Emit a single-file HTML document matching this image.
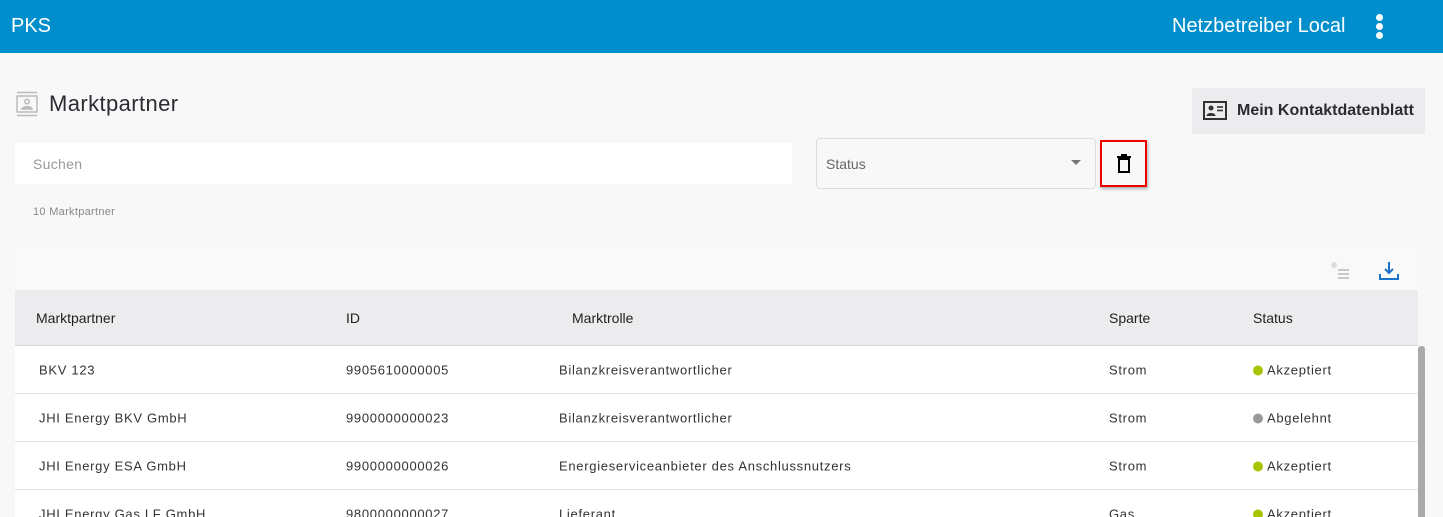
<!DOCTYPE html>
<html style="overflow:hidden"><head><meta charset="utf-8"><style>
*{box-sizing:border-box;margin:0;padding:0}
html,body{overflow:hidden}
body{width:1443px;height:517px;background:#f8f8f8;font-family:"Liberation Sans",sans-serif;position:relative;color:#222}
.top{position:absolute;left:0;top:0;width:1443px;height:53px;background:#008fcc;color:#fff}
.abs{position:absolute}
.hdr{position:absolute;left:15px;top:290px;width:1403px;height:56px;background:#ececee;border-bottom:1px solid #d6d6d6;font-size:14px;color:#222}
.row{position:absolute;left:15px;width:1403px;height:48px;background:#fff;border-bottom:1px solid #e2e2e2;font-size:13px;color:#333;letter-spacing:0.7px}
.row span,.hdr span{position:absolute;top:50%;transform:translateY(-50%);white-space:nowrap}
.dot{display:inline-block;width:10px;height:10px;border-radius:50%;margin-right:4px;vertical-align:-1px}
</style></head><body>
<div class="top">
<div class="abs" style="left:11px;top:15px;font-size:20px">PKS</div>
<div class="abs" style="left:1172px;top:15px;font-size:20px">Netzbetreiber Local</div>
<div class="abs" style="left:1376px;top:14px;width:7px">
<div style="width:7px;height:7px;border-radius:50%;background:#fff;margin-bottom:2px"></div>
<div style="width:7px;height:7px;border-radius:50%;background:#fff;margin-bottom:2px"></div>
<div style="width:7px;height:7px;border-radius:50%;background:#fff"></div></div>
</div>
<svg class="abs" style="left:16px;top:91px" width="22" height="26" viewBox="0 0 22 26"><g fill="none" stroke="#bbb" stroke-width="1.5"><line x1="1" y1="1.5" x2="21" y2="1.5"/><line x1="1" y1="24.5" x2="21" y2="24.5"/><rect x="1" y="5" width="20" height="16"/><circle cx="11" cy="10.5" r="2.3"/><path d="M6 18c1-3 9-3 10 0z" fill="#bbb"/></g></svg>
<div class="abs" style="left:49px;top:91px;font-size:22px;color:#2b2b33;letter-spacing:0.4px">Marktpartner</div>
<div class="abs" style="left:15px;top:143px;width:777px;height:41px;background:#fff"></div>
<div class="abs" style="left:33px;top:156px;font-size:14px;color:#999;letter-spacing:0.3px">Suchen</div>
<div class="abs" style="left:33px;top:206px;font-size:11px;color:#888;letter-spacing:0.3px">10 Marktpartner</div>
<div class="abs" style="left:816px;top:138px;width:280px;height:51px;border:1px solid #ddd;border-radius:4px;background:#f8f8f8"></div>
<div class="abs" style="left:826px;top:156px;font-size:14px;color:#666">Status</div>
<div class="abs" style="left:1071px;top:160px;width:0;height:0;border-left:5px solid transparent;border-right:5px solid transparent;border-top:5px solid #777"></div>
<div class="abs" style="left:1100px;top:140px;width:47px;height:47px;border:2px solid #e00;box-shadow:1px 2px 3px rgba(0,0,0,.3)"></div>
<svg class="abs" style="left:1116px;top:154px" width="16" height="20" viewBox="0 0 16 20"><g fill="none" stroke="#000" stroke-width="2"><line x1="1" y1="3" x2="15" y2="3"/><line x1="5" y1="1" x2="11" y2="1"/><rect x="3" y="5" width="10" height="13"/></g></svg>
<div class="abs" style="left:1192px;top:88px;width:233px;height:46px;background:#ececee;border-radius:2px"></div>
<svg class="abs" style="left:1203px;top:101px" width="24" height="19" viewBox="0 0 24 19"><rect x="1" y="1" width="22" height="17" fill="none" stroke="#333" stroke-width="2"/><circle cx="8" cy="7" r="2.5" fill="#333"/><path d="M3.5 15c0-4 9-4 9 0z" fill="#333"/><g stroke="#333" stroke-width="1.6"><line x1="14" y1="6" x2="20" y2="6"/><line x1="14" y1="9.5" x2="20" y2="9.5"/></g></svg>
<div class="abs" style="left:1237px;top:102px;font-size:16px;font-weight:bold;color:#2b2b33">Mein Kontaktdatenblatt</div>
<div class="abs" style="left:15px;top:242px;width:1403px;height:48px;background:#f9f9f9"></div>
<svg class="abs" style="left:1330px;top:262px" width="20" height="18" viewBox="0 0 20 18"><circle cx="4" cy="3" r="3" fill="#ddd"/><g stroke="#bbb" stroke-width="1.6"><line x1="8" y1="8" x2="19" y2="8"/><line x1="8" y1="12" x2="19" y2="12"/><line x1="8" y1="16" x2="19" y2="16"/></g></svg>
<svg class="abs" style="left:1379px;top:261px" width="20" height="20" viewBox="0 0 20 20"><g fill="none" stroke="#1a73c8" stroke-width="2"><line x1="10" y1="1" x2="10" y2="12"/><path d="M6 8l4 4 4-4"/><path d="M1 13v5h18v-5"/></g></svg>
<div class="hdr"><span style="left:21px">Marktpartner</span><span style="left:331px">ID</span><span style="left:557px">Marktrolle</span><span style="left:1094px">Sparte</span><span style="left:1238px">Status</span></div>
<div class="row" style="top:346px"><span style="left:24px">BKV 123</span><span style="left:331px">9905610000005</span><span style="left:544px">Bilanzkreisverantwortlicher</span><span style="left:1094px">Strom</span><span style="left:1238px"><i class="dot" style="background:#a8c400"></i>Akzeptiert</span></div>
<div class="row" style="top:394px"><span style="left:24px">JHI Energy BKV GmbH</span><span style="left:331px">9900000000023</span><span style="left:544px">Bilanzkreisverantwortlicher</span><span style="left:1094px">Strom</span><span style="left:1238px"><i class="dot" style="background:#999"></i>Abgelehnt</span></div>
<div class="row" style="top:442px"><span style="left:24px">JHI Energy ESA GmbH</span><span style="left:331px">9900000000026</span><span style="left:544px">Energieserviceanbieter des Anschlussnutzers</span><span style="left:1094px">Strom</span><span style="left:1238px"><i class="dot" style="background:#a8c400"></i>Akzeptiert</span></div>
<div class="row" style="top:490px"><span style="left:24px">JHI Energy Gas LF GmbH</span><span style="left:331px">9800000000027</span><span style="left:544px">Lieferant</span><span style="left:1094px">Gas</span><span style="left:1238px"><i class="dot" style="background:#a8c400"></i>Akzeptiert</span></div>
<div class="abs" style="left:1418px;top:346px;width:7px;height:171px;background:#aaa;border-radius:3px 3px 0 0"></div>
</body></html>
